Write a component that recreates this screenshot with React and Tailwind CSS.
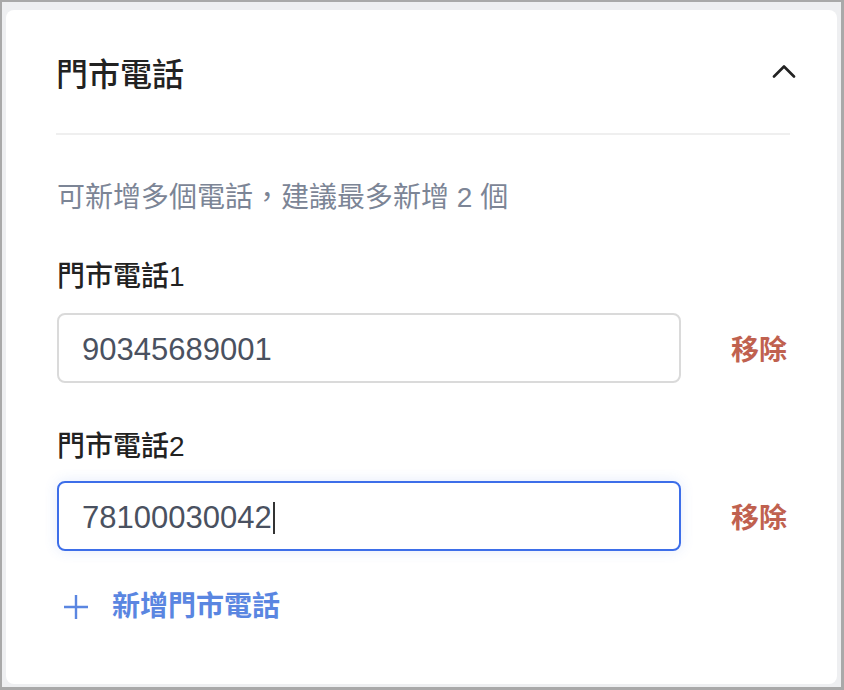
import React from 'react';

const font = 'font-["Liberation_Sans","Noto_Sans_CJK_TC",sans-serif]';

function ChevronUp() {
  return (
    <svg width="24" height="15" viewBox="0 0 24 15" fill="none">
      <path d="M2 13.5L12 3.5L22 13.5" stroke="#222" strokeWidth="2.6" strokeLinecap="round" strokeLinejoin="round" />
    </svg>
  );
}

function Plus() {
  return (
    <svg width="26" height="26" viewBox="0 0 26 26" fill="none">
      <path d="M13 1V25M1 13H25" stroke="#5a86e1" strokeWidth="2.4" />
    </svg>
  );
}

function PhoneField({ label, value, focused, className, gap }) {
  return (
    <div className={className}>
      <div className="text-[28px] leading-[40px] font-medium text-[#222]">{label}</div>
      <div className={`${gap} flex items-center`}>
        <div
          className={
            focused
              ? 'flex h-[70px] w-[624px] items-center rounded-lg border-2 border-[#3d6ee9] pl-[23px] pt-[3px] shadow-[0_0_14px_rgba(61,110,233,0.14)]'
              : 'flex h-[70px] w-[624px] items-center rounded-lg border-2 border-[#dadada] pl-[23px] pt-[3px]'
          }
        >
          <span className="text-[31px] leading-[40px] text-[#4a5160]">{value}</span>
          {focused && <span className="ml-[1px] h-[32px] w-[2px] bg-[#333]" />}
        </div>
        <button className="ml-[50px] pt-[5px] text-[28px] leading-[40px] font-semibold text-[#c0614f]">移除</button>
      </div>
    </div>
  );
}

export default function App() {
  return (
    <div className={`${font} h-[690px] w-[844px] border-t-2 border-l-2 border-r-[3px] border-b-[3px] border-[#a9a9a9] bg-[#eeeff1] pt-2 pl-1 pr-1 pb-[3px]`}>
      <div className="h-full rounded-lg bg-white">
        <div className="flex items-center justify-between pl-[50px] pr-[41px] pt-[45px] pb-[38px]">
          <h2 className="text-[32px] leading-[40px] font-medium text-[#222]">門市電話</h2>
          <div className="-mt-[9px]">
            <ChevronUp />
          </div>
        </div>
        <div className="ml-[50px] mr-[47px] h-[2px] bg-[#efefef]" />

        <div className="pl-[51px]">
          <p className="mt-[43px] text-[28px] leading-[40px] text-[#7c8596]">可新增多個電話，建議最多新增 2 個</p>
          <PhoneField className="mt-[39px]" gap="mt-4" label="門市電話1" value="90345689001" />
          <PhoneField className="mt-[44px]" gap="mt-[14px]" label="門市電話2" value="78100030042" focused />
          <button className="mt-[36px] flex items-center pl-[6px]">
            <Plus />
            <span className="ml-[23px] text-[28px] leading-[40px] font-semibold text-[#5a86e1]">新增門市電話</span>
          </button>
        </div>
      </div>
    </div>
  );
}
